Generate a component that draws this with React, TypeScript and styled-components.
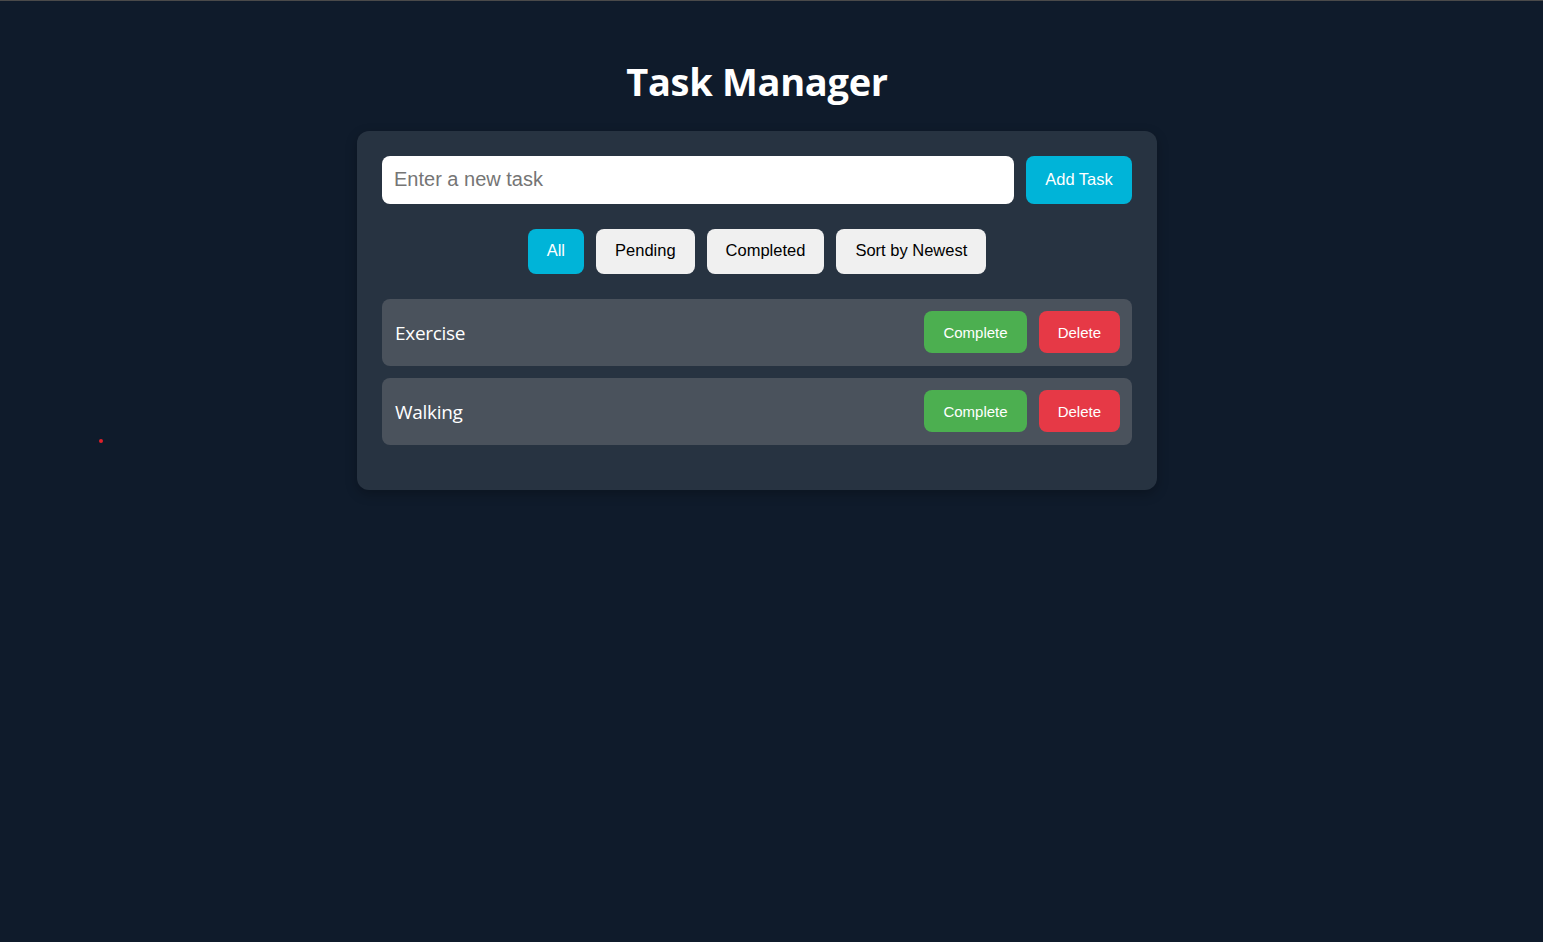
import React, { useState } from "react";
import styled, { createGlobalStyle } from "styled-components";

const Global = createGlobalStyle`
  html, body { margin: 0; padding: 0; }
  body {
    background: #0f1b2b;
    border-top: 1px solid #4a4a4a;
    min-height: 941px;
    font-family: "Liberation Sans", Arial, sans-serif;
  }
`;

const Page = styled.div`
  position: relative;
  display: flex;
  flex-direction: column;
  align-items: center;
  padding: 52px 29px 0 0;
`;

const Title = styled.h1`
  margin: 0 0 22px;
  font-family: "Open Sans", "Noto Sans", sans-serif;
  font-weight: 700;
  font-size: 38px;
  line-height: 56px;
  color: #ffffff;
  letter-spacing: -0.3px;
`;

const Card = styled.div`
  width: 800px;
  box-sizing: border-box;
  padding: 25px 25px 45px;
  background: #273341;
  border-radius: 12px;
  box-shadow: 0 4px 12px rgba(0, 0, 0, 0.25);
  display: flex;
  flex-direction: column;
`;

const InputRow = styled.div`
  display: flex;
  gap: 12px;
  margin-bottom: 25px;
`;

const TaskInput = styled.input`
  flex: 1;
  height: 48px;
  box-sizing: border-box;
  padding: 0 12px 2px;
  border: none;
  border-radius: 8px;
  font-family: "Liberation Sans", Arial, sans-serif;
  font-size: 20px;
  color: #222;
  background: #fff;
  outline: none;
  &::placeholder { color: #757575; }
`;

const AddButton = styled.button`
  width: 106px;
  height: 48px;
  padding: 0 0 2px;
  border: none;
  border-radius: 8px;
  background: #00b4d8;
  color: #fff;
  font-family: "Liberation Sans", Arial, sans-serif;
  font-size: 16.5px;
  cursor: pointer;
`;

const Filters = styled.div`
  display: flex;
  justify-content: center;
  gap: 12px;
  margin-bottom: 25px;
`;

const FilterButton = styled.button<{ $active?: boolean }>`
  height: 45px;
  padding: 0 19px 2px;
  border: none;
  border-radius: 8px;
  background: ${(p) => (p.$active ? "#00b4d8" : "#f0f0f0")};
  color: ${(p) => (p.$active ? "#ffffff" : "#000000")};
  font-family: "Liberation Sans", Arial, sans-serif;
  font-size: 16.5px;
  cursor: pointer;
`;

const TaskList = styled.div`
  display: flex;
  flex-direction: column;
  gap: 12px;
`;

const TaskRow = styled.div`
  height: 67px;
  box-sizing: border-box;
  display: flex;
  align-items: center;
  justify-content: space-between;
  padding: 0 12px 1px 13px;
  background: #4a525c;
  border-radius: 8px;
`;

const TaskText = styled.span`
  font-family: "Open Sans", "Noto Sans", sans-serif;
  font-size: 19px;
  color: #ffffff;
  letter-spacing: -0.3px;
  padding-top: 2px;
`;

const Actions = styled.div`
  display: flex;
  gap: 12px;
`;

const ActionButton = styled.button<{ $kind: "complete" | "delete" }>`
  height: 42px;
  padding: 0 19px;
  border: none;
  border-radius: 8px;
  background: ${(p) => (p.$kind === "complete" ? "#4caf50" : "#e63946")};
  color: #fff;
  font-family: "Liberation Sans", Arial, sans-serif;
  font-size: 15px;
  cursor: pointer;
`;

const Dot = styled.span`
  position: absolute;
  left: 99px;
  top: 438px;
  width: 4px;
  height: 4px;
  border-radius: 50%;
  background: #e0202a;
`;

export default function App() {
  const [filter, setFilter] = useState("All");
  const tasks = ["Exercise", "Walking"];
  return (
    <>
      <Global />
      <Page>
        <Title>Task Manager</Title>
        <Card>
          <InputRow>
            <TaskInput placeholder="Enter a new task" />
            <AddButton>Add Task</AddButton>
          </InputRow>
          <Filters>
            {["All", "Pending", "Completed"].map((f) => (
              <FilterButton key={f} $active={filter === f} onClick={() => setFilter(f)}>
                {f}
              </FilterButton>
            ))}
            <FilterButton>Sort by Newest</FilterButton>
          </Filters>
          <TaskList>
            {tasks.map((t) => (
              <TaskRow key={t}>
                <TaskText>{t}</TaskText>
                <Actions>
                  <ActionButton $kind="complete">Complete</ActionButton>
                  <ActionButton $kind="delete">Delete</ActionButton>
                </Actions>
              </TaskRow>
            ))}
          </TaskList>
        </Card>
        <Dot />
      </Page>
    </>
  );
}
